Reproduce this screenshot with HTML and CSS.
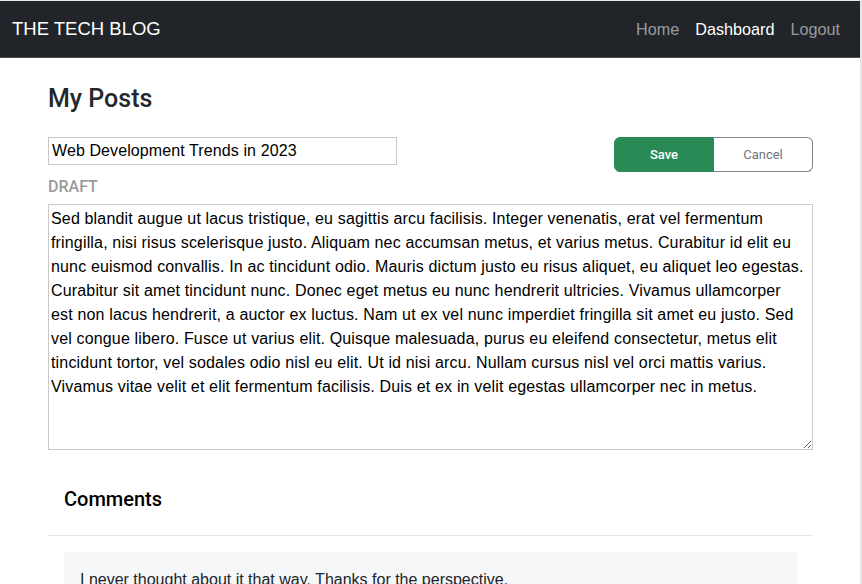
FILE: index.html
```html
<!DOCTYPE html>
<html lang="en">
<head>
<meta charset="utf-8">
<title>The Tech Blog</title>
<link rel="stylesheet" href="styles.css">
</head>
<body>
<div class="page">
  <nav class="navbar">
    <a class="brand" href="#">THE TECH BLOG</a>
    <div class="nav-links">
      <a class="nav-link" href="#">Home</a>
      <a class="nav-link active" href="#">Dashboard</a>
      <a class="nav-link" href="#">Logout</a>
    </div>
  </nav>
  <main class="container">
    <h2 class="page-title">My Posts</h2>
    <div class="edit-row">
      <input class="title-input" type="text" value="Web Development Trends in 2023">
      <div class="btn-group">
        <button class="btn btn-save">Save</button>
        <button class="btn btn-cancel">Cancel</button>
      </div>
    </div>
    <div class="status">DRAFT</div>
    <textarea class="body-input" wrap="off">Sed blandit augue ut lacus tristique, eu sagittis arcu facilisis. Integer venenatis, erat vel fermentum
fringilla, nisi risus scelerisque justo. Aliquam nec accumsan metus, et varius metus. Curabitur id elit eu
nunc euismod convallis. In ac tincidunt odio. Mauris dictum justo eu risus aliquet, eu aliquet leo egestas.
Curabitur sit amet tincidunt nunc. Donec eget metus eu nunc hendrerit ultricies. Vivamus ullamcorper
est non lacus hendrerit, a auctor ex luctus. Nam ut ex vel nunc imperdiet fringilla sit amet eu justo. Sed
vel congue libero. Fusce ut varius elit. Quisque malesuada, purus eu eleifend consectetur, metus elit
tincidunt tortor, vel sodales odio nisl eu elit. Ut id nisi arcu. Nullam cursus nisl vel orci mattis varius.
Vivamus vitae velit et elit fermentum facilisis. Duis et ex in velit egestas ullamcorper nec in metus.</textarea>
    <section class="comments">
      <div class="comments-header">
        <h4 class="comments-title">Comments</h4>
      </div>
      <div class="comments-body">
        <div class="comment">I never thought about it that way. Thanks for the perspective.</div>
      </div>
    </section>
  </main>
</div>
</body>
</html>
```
FILE: styles.css
```css
* { box-sizing: border-box; }
html, body { margin: 0; padding: 0; }
body {
  font-family: "Liberation Sans", Arial, sans-serif;
  font-size: 16px;
  line-height: 1.5;
  color: #212529;
  background: #fff;
  overflow: hidden;
}
.page {
  width: 862px;
  min-height: 584px;
  border-top: 1px solid #e6e6e6;
  border-right: 2px solid #e6e6e6;
}
.navbar {
  height: 57px;
  background: #212529;
  border-bottom: 1px solid #4a4e53;
  display: flex;
  align-items: center;
  justify-content: space-between;
  padding: 0 12px;
}
.brand {
  color: #fff;
  text-decoration: none;
  font-size: 18.5px;
  line-height: 1;
}
.nav-links { display: flex; }
.nav-link {
  color: rgba(255,255,255,0.55);
  text-decoration: none;
  font-size: 16.2px;
  padding: 0 8px;
}
.nav-link.active { color: #fff; }
.container {
  padding: 0 47px 0 48px;
}
.page-title {
  font-family: Roboto, "Liberation Sans", sans-serif;
  font-weight: 500;
  font-size: 25px;
  line-height: 30px;
  margin: 26px 0 23px;
  color: #23272b;
}
.edit-row {
  display: flex;
  justify-content: space-between;
  align-items: flex-start;
}
.title-input {
  width: 349px;
  height: 28px;
  border: 1px solid #c9c9c9;
  padding: 1px 3px;
  font-family: "Liberation Sans", Arial, sans-serif;
  font-size: 16px;
  letter-spacing: 0.1px;
  color: #000;
  outline: none;
}
.btn-group { display: flex; }
.btn {
  height: 35px;
  width: 100px;
  font-family: Roboto, "Liberation Sans", sans-serif;
  font-size: 13px;
  cursor: pointer;
}
.btn-save {
  background: #2a8a56;
  color: #fff;
  border: 1px solid #2a8a56;
  border-radius: 6px 0 0 6px;
  font-weight: 500;
}
.btn-cancel {
  width: 99px;
  background: #fff;
  color: #6c757d;
  border: 1px solid #7d8388;
  border-left: none;
  border-radius: 0 6px 6px 0;
}
.status {
  font-family: Roboto, "Liberation Sans", sans-serif;
  font-weight: 500;
  font-size: 16px;
  color: #9a9a9a;
  margin-top: 3px;
  line-height: 24px;
}
.body-input {
  display: block;
  width: 765px;
  height: 246px;
  margin-top: 5px;
  border: 1px solid #c9c9c9;
  padding: 2px 0 2px 2px;
  font-family: "Liberation Sans", Arial, sans-serif;
  font-size: 16px;
  letter-spacing: 0.16px;
  line-height: 24px;
  color: #000;
  resize: both;
  overflow: hidden;
  white-space: pre;
  outline: none;
}
.comments { margin-top: 21px; }
.comments-header {
  padding: 16px 16px;
  border-bottom: 1px solid #e3e5e8;
}
.comments-title {
  font-family: Roboto, "Liberation Sans", sans-serif;
  font-weight: 500;
  font-size: 20px;
  line-height: 24px;
  margin: 0 0 8px;
  color: #000;
}
.comments-body { padding: 16px; }
.comment {
  background: #f6f7f9;
  padding: 16px;
  color: #212529;
}
```
